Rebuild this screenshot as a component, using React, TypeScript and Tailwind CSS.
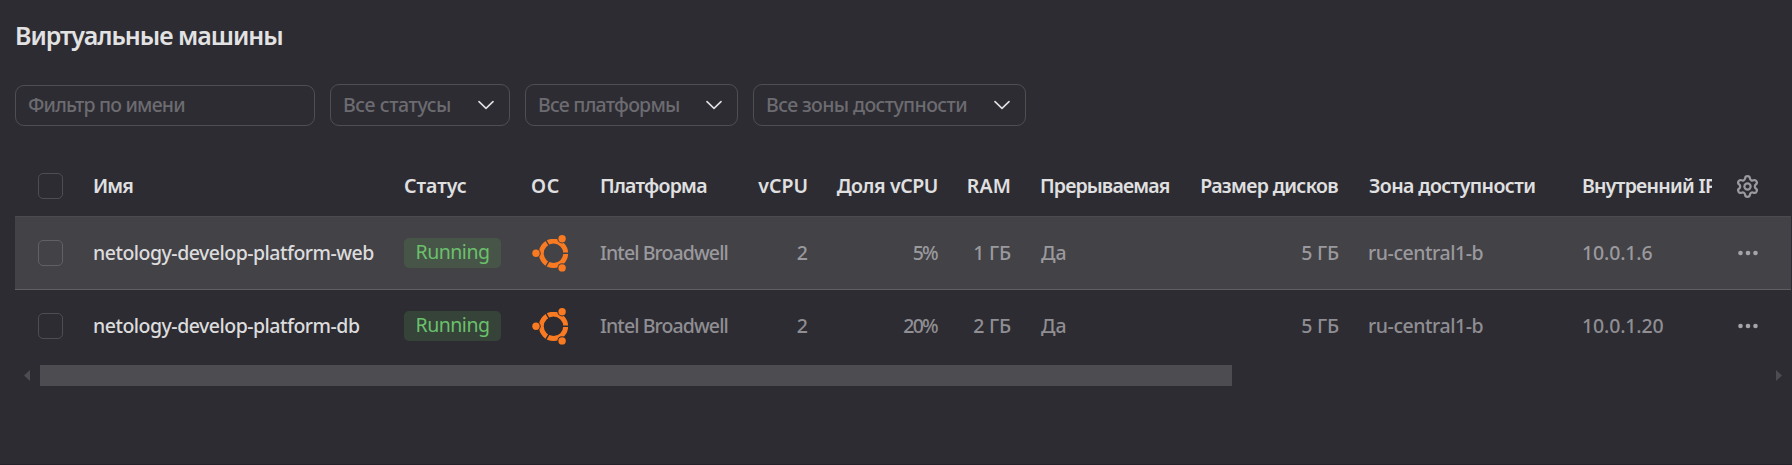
import React from "react";
import { Settings } from "lucide-react";

const GRID =
  "grid grid-cols-[78px_311px_127px_69px_148px_60px_131px_72px_189px_139px_213px_160px_79px] items-center";

function Chevron() {
  return (
    <svg className="h-[10px] w-4 shrink-0" viewBox="0 0 16 10" fill="none">
      <path d="M1 1.6 8 8.4 15 1.6" stroke="#e0e0e1" strokeWidth="1.6" strokeLinecap="round" strokeLinejoin="round" />
    </svg>
  );
}

function Select({ label, className }: { label: string; className: string }) {
  return (
    <button
      className={`flex h-[42px] items-center justify-between rounded-[9px] border border-[#4f4e53] pr-[15px] pl-3 text-[#6c6b70] ${className}`}
    >
      <span className="whitespace-nowrap">{label}</span>
      <Chevron />
    </button>
  );
}

function Checkbox({ hovered }: { hovered?: boolean }) {
  return (
    <span
      className={`ml-[23px] block h-[26px] w-[25px] rounded-[5px] border ${hovered ? "border-[#616065]" : "border-[#4e4d53]"}`}
    />
  );
}

function Ubuntu({ id }: { id: string }) {
  return (
    <svg className="h-[38px] w-[38px]" viewBox="0 0 38 38">
      <mask id={id}>
        <rect width="38" height="38" fill="#fff" />
        <g stroke="#000" strokeWidth="1.4">
          <path d="M22.5 19.3H38M22.5 19.3 14.5 5.5M22.5 19.3 14.5 33.1" />
        </g>
        <g fill="#000">
          <circle cx="5" cy="19.3" r="4.7" />
          <circle cx="31.1" cy="4.7" r="4.7" />
          <circle cx="31.1" cy="33.9" r="4.7" />
        </g>
      </mask>
      <circle cx="22.5" cy="19.3" r="12.2" fill="none" stroke="#f97a20" strokeWidth="4.9" mask={`url(#${id})`} />
      <g fill="#f97a20">
        <circle cx="5" cy="19.3" r="3.7" />
        <circle cx="31.1" cy="4.7" r="3.7" />
        <circle cx="31.1" cy="33.9" r="3.7" />
      </g>
    </svg>
  );
}

type Vm = {
  name: string;
  share: string;
  ram: string;
  ip: string;
  hovered?: boolean;
};

const vms: Vm[] = [
  { name: "netology-develop-platform-web", share: "5%", ram: "1 ГБ", ip: "10.0.1.6", hovered: true },
  { name: "netology-develop-platform-db", share: "20%", ram: "2 ГБ", ip: "10.0.1.20" },
];

function Row({ vm, index }: { vm: Vm; index: number }) {
  return (
    <div
      className={`${GRID} whitespace-nowrap ${
        vm.hovered
          ? "h-[74px] border-y border-t-[#4b4a50] border-b-[#5f5e63] bg-[#434247] text-[#9a999d]"
          : "h-[72px] text-[#8f8e92]"
      }`}
    >
      <Checkbox hovered={vm.hovered} />
      <span className="tracking-[-0.5px] text-[#dcdcdd]">{vm.name}</span>
      <span
        className={`flex h-[30px] w-[97px] items-center justify-center rounded-[5px] pb-[2px] font-normal tracking-[-0.5px] text-[#6bc06c] ${
          vm.hovered ? "bg-[#475548]" : "bg-[#364339]"
        }`}
      >
        Running
      </span>
      <Ubuntu id={`ring-${index}`} />
      <span className="tracking-[-0.9px]">Intel Broadwell</span>
      <span className="text-right">2</span>
      <span className="pr-[2px] text-right tracking-[-1.7px]">{vm.share}</span>
      <span className="text-right tracking-[-0.2px]">{vm.ram}</span>
      <span className="pl-[30px]">Да</span>
      <span className="text-right tracking-[-0.2px]">5 ГБ</span>
      <span className="pl-[29px] tracking-[-0.45px]">ru-central1-b</span>
      <span className="pl-[30px] tracking-[-0.15px]">{vm.ip}</span>
      <svg className="ml-[26px] h-[6px] w-[20px]" viewBox="0 0 20 6" fill="#a5a4a8">
        <circle cx="2.5" cy="3" r="2.3" />
        <circle cx="10" cy="3" r="2.3" />
        <circle cx="17.5" cy="3" r="2.3" />
      </svg>
    </div>
  );
}

export default function App() {
  return (
    <main className="h-[465px] w-full overflow-hidden border-b border-[#232129] bg-[#2d2c33] pl-[15px] font-['Noto_Sans','Open_Sans',sans-serif] text-[19.5px] leading-[30px] font-medium">
      <h1 className="pt-[17px] text-[25px] leading-[36px] font-semibold tracking-[-1.02px] text-[#e2e2e3]">Виртуальные машины</h1>

      <div className="mt-[31px] flex items-end gap-[15px]">
        <div className="flex h-[41px] w-[300px] items-center rounded-[9px] border border-[#4f4e53] pb-px pl-3 tracking-[-0.8px] text-[#6c6b70]">
          Фильтр по имени
        </div>
        <Select label="Все статусы" className="w-[180px] tracking-[-0.4px]" />
        <Select label="Все платформы" className="w-[213px] tracking-[-0.75px]" />
        <Select label="Все зоны доступности" className="w-[273px] tracking-[-0.6px]" />
      </div>

      <section className="mt-[30px] w-[1776px]">
        <div className={`${GRID} h-[60px] font-semibold whitespace-nowrap text-[#e0e0e1]`}>
          <Checkbox />
          <span className="tracking-[-0.9px]">Имя</span>
          <span>Статус</span>
          <span className="tracking-[0.8px]">ОС</span>
          <span className="tracking-[-0.75px]">Платформа</span>
          <span className="text-right">vCPU</span>
          <span className="pr-px text-right tracking-[-0.4px]">Доля vCPU</span>
          <span className="text-right tracking-[0.2px]">RAM</span>
          <span className="pl-[29px] tracking-[-0.85px]">Прерываемая</span>
          <span className="pr-px text-right tracking-[-0.65px]">Размер дисков</span>
          <span className="pl-[30px] tracking-[-0.58px]">Зона доступности</span>
          <span className="overflow-hidden pl-[30px] tracking-[-0.72px]">Внутренний IP</span>
          <Settings className="ml-[23px] size-[25px] text-[#9b9a9e]" strokeWidth={2.1} />
        </div>
        {vms.map((vm, i) => (
          <Row key={vm.name} vm={vm} index={i} />
        ))}
        <div className="mt-[3px] flex h-[21px] items-center pr-[9px] pl-[9px]">
          <svg className="h-[11px] w-[6px]" viewBox="0 0 6 11" fill="#4d4c51">
            <path d="M6 0v11L0 5.5z" />
          </svg>
          <div className="ml-[10px] h-[21px] w-[1192px] bg-[#4d4c51]" />
          <svg className="ml-auto h-[11px] w-[6px]" viewBox="0 0 6 11" fill="#4d4c51">
            <path d="M0 0v11l6-5.5z" />
          </svg>
        </div>
      </section>
    </main>
  );
}
